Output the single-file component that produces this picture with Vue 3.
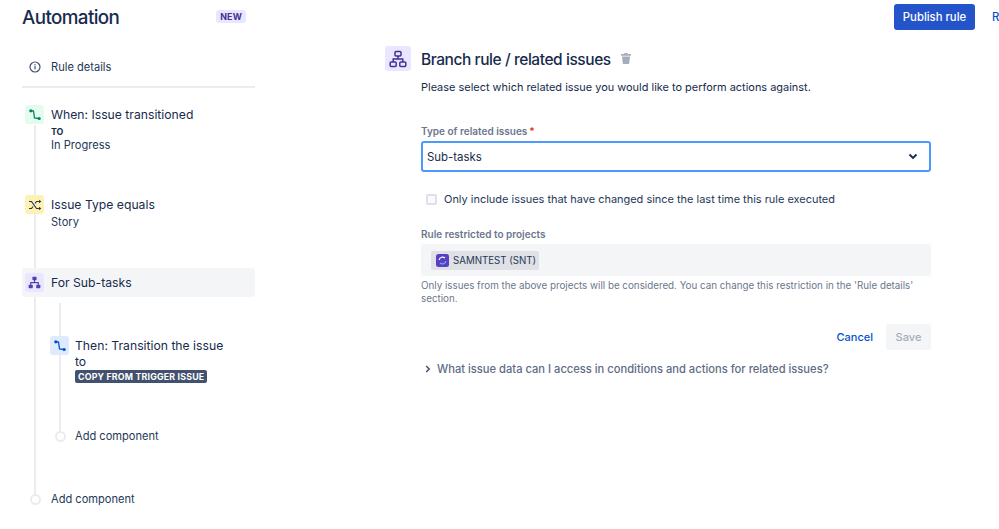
<script setup>
const helpText = "Only issues from the above projects will be considered. You can change this restriction in the 'Rule details' section.";
</script>

<template>
  <div class="page">
    <aside class="side">
      <div class="side-head">
        <h1>Automation</h1>
        <span class="new">NEW</span>
      </div>
      <div class="details">
        <svg class="info" width="12" height="12" viewBox="0 0 12 12"><circle cx="6" cy="6" r="5" fill="none" stroke="#42526e" stroke-width="1.2"/><rect x="5.400" y="5.200" width="1.200" height="3.200" fill="#42526e"/><rect x="5.400" y="3.200" width="1.200" height="1.200" fill="#42526e"/></svg>
        <span>Rule details</span>
      </div>
      <div class="flow">
        <i class="line main-line"></i>
        <i class="line sub-line"></i>
        <div class="node n-when">
          <span class="ico green"><svg width="14" height="14" viewBox="0 0 14 14"><path d="M2.500 2.500 5.500 3 6.500 10 11 10.500" fill="none" stroke="#00875a" stroke-width="1.300"/><circle cx="2.800" cy="2.800" r="1.600" fill="#00875a"/><circle cx="11.200" cy="10.500" r="1.600" fill="#00875a"/></svg></span>
          <div class="txt">
            <div class="t">When: Issue transitioned</div>
            <div class="to">TO</div>
            <div class="s">In Progress</div>
          </div>
        </div>
        <div class="node n-if">
          <span class="ico yellow"><svg width="14" height="12" viewBox="0 0 14 12"><path d="M1 2.500h2.500l5 7H12M1 9.500h2.500l1.500-2M7 4.500l1.500-2H12" fill="none" stroke="#253858" stroke-width="1.200"/><path d="M11 .8 13.400 2.500 11 4.200ZM11 7.800l2.400 1.700L11 11.200Z" fill="#253858"/></svg></span>
          <div class="txt">
            <div class="t">Issue Type equals</div>
            <div class="s story">Story</div>
          </div>
        </div>
        <div class="node n-branch">
          <span class="ico purple"><svg width="13" height="13" viewBox="0 0 13 13"><rect x="4.400" y=".8" width="4.200" height="3.400" rx=".8" fill="#5243aa"/><rect x=".6" y="8.800" width="4.200" height="3.400" rx=".8" fill="#5243aa"/><rect x="8.200" y="8.800" width="4.200" height="3.400" rx=".8" fill="#5243aa"/><path d="M6.500 4v2.600M2.700 9V6.600h7.600V9" fill="none" stroke="#5243aa" stroke-width="1.100"/></svg></span>
          <div class="t">For Sub-tasks</div>
        </div>
        <div class="node n-then">
          <span class="ico blue"><svg width="14" height="14" viewBox="0 0 14 14"><path d="M2.500 2.500 5.500 3 6.500 10 11 10.500" fill="none" stroke="#0052cc" stroke-width="1.300"/><circle cx="2.800" cy="2.800" r="1.600" fill="#0052cc"/><circle cx="11.200" cy="10.500" r="1.600" fill="#0052cc"/></svg></span>
          <div class="txt then-txt">
            <div class="t">Then: Transition the issue to</div>
            <span class="lozenge">COPY FROM TRIGGER ISSUE</span>
          </div>
        </div>
        <div class="add add-sub"><i class="dot"></i><span>Add component</span></div>
        <div class="add add-main"><i class="dot"></i><span>Add component</span></div>
      </div>
    </aside>

    <main class="main">
      <div class="topbar">
        <button class="publish">Publish rule</button>
        <span class="return">R</span>
      </div>
      <section class="panel">
        <div class="panel-head">
          <span class="panel-ico"><svg width="18" height="18" viewBox="0 0 18 18"><rect x="6" y="1.600" width="6" height="4.400" rx="1" fill="none" stroke="#403294" stroke-width="1.500"/><rect x="1.200" y="12" width="6" height="4.400" rx="1" fill="none" stroke="#403294" stroke-width="1.500"/><rect x="10.800" y="12" width="6" height="4.400" rx="1" fill="none" stroke="#403294" stroke-width="1.500"/><path d="M9 6v3M4.200 12V9h9.600v3" fill="none" stroke="#403294" stroke-width="1.500"/></svg></span>
          <h2>Branch rule / related issues</h2>
          <svg class="trash" width="10" height="11" viewBox="0 0 10 11"><rect x="0" y="1" width="10" height="1.800" rx=".5" fill="#a5adba"/><rect x="3.400" y="0" width="3.200" height="1.400" fill="#a5adba"/><path d="M1 3.400h8l-.8 7.100a.6.6 0 0 1-.6.5H2.400a.6.6 0 0 1-.6-.5Z" fill="#a5adba"/></svg>
        </div>
        <div class="form">
          <p class="desc">Please select which related issue you would like to perform actions against.</p>
          <label class="label first">Type of related issues<em>*</em></label>
          <div class="select">
            <span>Sub-tasks</span>
            <svg width="10" height="7" viewBox="0 0 10 7"><path d="M1.500 1.500 5 5l3.500-3.500" fill="none" stroke="#172b4d" stroke-width="1.900"/></svg>
          </div>
          <div class="check"><i class="box"></i><span>Only include issues that have changed since the last time this rule executed</span></div>
          <label class="label second">Rule restricted to projects</label>
          <div class="projects">
            <span class="chip">
              <svg width="13" height="13" viewBox="0 0 13 13"><rect width="13" height="13" rx="2.500" fill="#5a3fc4"/><path d="M3.200 6a3.400 3.400 0 0 1 5.800-1.900" fill="none" stroke="#fff" stroke-width="1.300"/><path d="M9.800 7a3.400 3.400 0 0 1-5.800 1.900" fill="none" stroke="#4cc2f1" stroke-width="1.300"/></svg>
              SAMNTEST (SNT)
            </span>
          </div>
          <p class="help">{{ helpText }}</p>
          <div class="actions">
            <span class="cancel">Cancel</span>
            <span class="save">Save</span>
          </div>
          <div class="more">
            <svg width="6" height="8" viewBox="0 0 6 8"><path d="M1.200 1 4.200 4l-3 3" fill="none" stroke="#42526e" stroke-width="1.500"/></svg>
            <span>What issue data can I access in conditions and actions for related issues?</span>
          </div>
        </div>
      </section>
    </main>
  </div>
</template>

<style>
html, body { margin: 0; background: #fff; overflow: hidden; }
</style>

<style scoped>
.page {
  width: 999px;
  height: 529px;
  overflow: hidden;
  display: flex;
  font-family: Inter, "Liberation Sans", sans-serif;
  color: #172b4d;
  background: #fff;
}
.side { width: 233px; margin-left: 22px; flex: none; }
.side-head { height: 35px; display: flex; align-items: center; justify-content: space-between; padding-right: 9px; }
h1 { margin: -1px 0 0; font-size: 18.800px; font-weight: 500; letter-spacing: -0.6px; color: #172b4d; }
.new { background: #eae6ff; color: #403294; font-size: 8.800px; font-weight: 700; padding: 0 4px; height: 13px; line-height: 13px; border-radius: 3px; letter-spacing: .2px; margin-top: -2px; }
.details { padding-top: 12px; height: 39px; display: flex; align-items: center; font-size: 11.100px; color: #253858; border-bottom: 2px solid #ebecf0; }
.info { margin-left: 7px; margin-right: 10px; }
.flow { position: relative; height: 442px; padding-top: 17px; box-sizing: border-box; }
.line { position: absolute; width: 2px; background: #ebecf0; }
.main-line { left: 12px; top: 37px; height: 372px; }
.sub-line { left: 37px; top: 215px; height: 130px; }
.node { display: flex; position: relative; }
.ico { width: 19px; height: 19px; border-radius: 3px; flex: none; display: flex; align-items: center; justify-content: center; margin-left: 3px; margin-right: 7px; }
.green { background: #e3fcef; }
.yellow { background: #fff0b3; }
.purple { background: #eae6ff; }
.blue { background: #deebff; margin-left: 28px; margin-right: 6px; }
.txt { margin-top: 1px; }
.t { font-size: 12.200px; line-height: 18px; color: #172b4d; }
.to { font-size: 8.800px; font-weight: 700; line-height: 13px; margin-top: 1px; }
.s { font-size: 11.100px; line-height: 14px; color: #253858; }
.story { margin-top: 1px; }
.n-if { margin-top: 43px; }
.n-branch { background: #f4f5f7; border-radius: 3px; height: 29px; align-items: center; margin-top: 39px; }
.n-then { margin-top: 39px; }
.then-txt { width: 155px; }
.then-txt .t { line-height: 16px; padding-top: 1px; }
.lozenge { display: inline-block; background: #42526e; color: #fff; font-size: 8.800px; font-weight: 700; line-height: 13px; height: 13px; padding: 0 3px; border-radius: 2px; letter-spacing: .2px; white-space: nowrap; vertical-align: top; margin-top: 0; }
.add { position: absolute; display: flex; align-items: center; font-size: 11.100px; color: #253858; }
.dot { width: 7px; height: 7px; border: 2px solid #ebecf0; border-radius: 50%; background: #fff; display: block; box-sizing: content-box; }
.add-sub { left: 33px; top: 341px; gap: 9px; }
.add-main { left: 8px; top: 404px; gap: 10px; }

.main { flex: 1; min-width: 0; position: relative; }
.topbar { height: 35px; display: flex; justify-content: flex-end; align-items: flex-start; white-space: nowrap; }
.publish { margin: 4px 0 0 0; width: 81px; height: 26px; background: #2454c9; color: #fff; border: 0; border-radius: 3px; font: 500 11.300px/27px Inter, "Liberation Sans", sans-serif; padding: 0; }
.return { flex: none; width: 24px; padding-left: 17px; box-sizing: border-box; font-size: 11.300px; font-weight: 500; color: #0052cc; margin-top: 10px; }
.panel { margin: 11px 0 0 130px; width: 546px; }
.panel-head { display: flex; align-items: center; height: 25px; }
.panel-ico { width: 26px; height: 25px; background: #eae6ff; border-radius: 3px; display: flex; align-items: center; justify-content: center; margin-right: 10px; }
h2 { margin: 1px 0 0; font-size: 15.500px; font-weight: 500; letter-spacing: -0.43px; }
.trash { margin-left: 10px; }
.form { margin-left: 36px; width: 510px; }
.desc { margin: 9px 0 0; font-size: 10.950px; line-height: 15px; color: #172b4d; }
.label { display: block; font-size: 10px; font-weight: 600; color: #6b778c; line-height: 14px; }
.label em { color: #de350b; font-style: normal; margin-left: 2px; }
.first { margin-top: 29px; }
.select { margin-top: 3px; height: 31px; box-sizing: border-box; border: 2px solid #4c9aff; border-radius: 3px; display: flex; align-items: center; justify-content: space-between; padding: 0 11px 0 4px; font-size: 11.400px; color: #172b4d; }
.check { margin-top: 20px; display: flex; align-items: center; font-size: 10.960px; color: #253858; height: 14px; white-space: nowrap; }
.box { width: 7px; height: 7px; border: 2px solid #dfe1e6; border-radius: 2px; background: #fafbfc; margin: 0 7px 0 5px; display: block; box-sizing: content-box; }
.second { margin-top: 21px; }
.projects { margin-top: 3px; height: 32px; background: #f4f5f7; border-radius: 3px; display: flex; align-items: center; padding-left: 10px; }
.chip { height: 19px; width: 108px; box-sizing: border-box; background: #dfe1e6; border-radius: 2px; display: flex; align-items: center; gap: 4px; padding-left: 5px; font-size: 9.700px; color: #253858; white-space: nowrap; }
.chip svg { flex: none; }
.help { margin: 3px 0 0; font-size: 9.800px; line-height: 13px; color: #6b778c; }
.actions { margin-top: 19px; display: flex; justify-content: flex-end; align-items: center; gap: 13px; }
.cancel { font-size: 11px; font-weight: 500; color: #0052cc; }
.save { width: 45px; height: 26px; line-height: 26px; text-align: center; background: #f4f5f7; color: #a5adba; border-radius: 3px; font-size: 11px; font-weight: 500; }
.more { margin-top: 12px; display: flex; align-items: center; font-size: 11.170px; font-weight: 500; color: #5e6c84; white-space: nowrap; height: 14px; }
.more svg { margin: 0 6px 0 4px; }
</style>
